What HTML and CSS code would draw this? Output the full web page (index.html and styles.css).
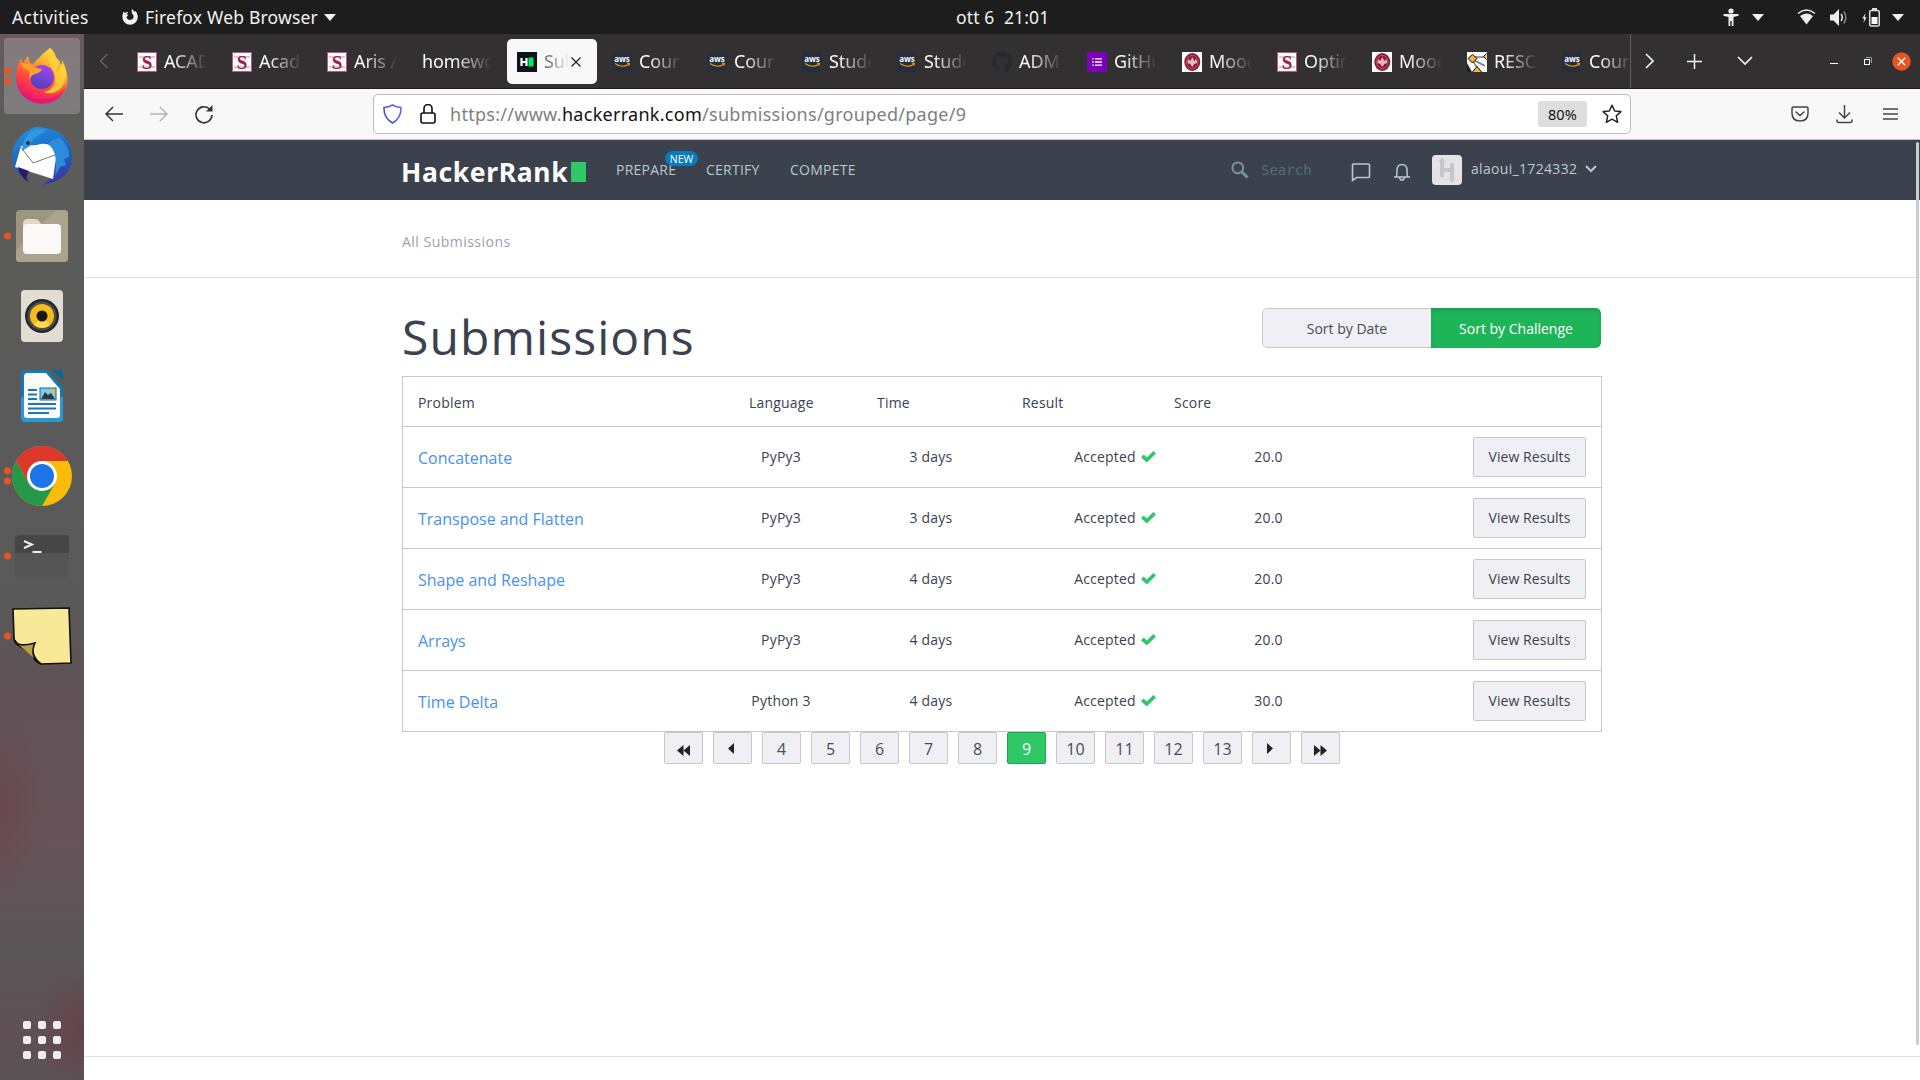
FILE: index.html
```html
<!DOCTYPE html>
<html lang="en">
<head>
<meta charset="utf-8">
<title>Submissions | HackerRank</title>
<link rel="stylesheet" href="styles.css">
</head>
<body>
<svg class="defs" width="0" height="0">
  <defs>
    <linearGradient id="ffBody" x1=".8" y1="0" x2=".3" y2="1"><stop offset="0" stop-color="#fff44f"/><stop offset=".35" stop-color="#ffa32b"/><stop offset=".65" stop-color="#ff4a3a"/><stop offset="1" stop-color="#e5107a"/></linearGradient>
    <linearGradient id="ffCore" x1=".7" y1="0" x2=".3" y2="1"><stop offset="0" stop-color="#a243f5"/><stop offset="1" stop-color="#4b42b5"/></linearGradient>
    <linearGradient id="tbBody" x1=".4" y1="0" x2=".7" y2="1"><stop offset="0" stop-color="#1f8ee0"/><stop offset=".5" stop-color="#1f62bd"/><stop offset="1" stop-color="#3c35a0"/></linearGradient>
    <linearGradient id="shield" x1="0" y1="1" x2="1" y2="0"><stop offset="0" stop-color="#2448d8"/><stop offset="1" stop-color="#9059ff"/></linearGradient>
    <symbol id="fav-s" viewBox="0 0 20 20"><rect x=".5" y=".5" width="19" height="19" fill="#fff" stroke="#c0547a"/><path d="M2 5h16M2 15h16" stroke="#e6c3cf" stroke-width="2"/><text x="10" y="17" text-anchor="middle" class="fav-serif">S</text></symbol>
    <symbol id="fav-aws" viewBox="0 0 20 20"><rect width="20" height="20" fill="#252f3e"/><text x="10" y="10" text-anchor="middle" class="fav-aws">aws</text><path d="M3 11.500Q10 16.500 16.500 12.500M15 11.300l2.500.2-.6 2.200" fill="none" stroke="#f90" stroke-width="1.100"/></symbol>
    <symbol id="fav-moodle" viewBox="0 0 20 20"><rect width="20" height="20" fill="#fff"/><ellipse cx="10.300" cy="10" rx="8" ry="9" fill="#8e1c37"/><ellipse cx="10.300" cy="10" rx="5.800" ry="6.700" fill="none" stroke="#b96378" stroke-width=".8"/><path d="M10.300 15l-2-3-3-1 1-4 2 2 2-4 2 4 2-2 1 4-3 1z" fill="#e3b7c2"/></symbol>
    <symbol id="dot2" viewBox="0 0 12 20"><circle cx="7.500" cy="4.800" r="3.500" fill="#e95420"/><circle cx="7.500" cy="15" r="3.500" fill="#e95420"/></symbol>
    <symbol id="caret" viewBox="0 0 12 7"><path d="M0 0h12L6 7z" fill="#f2f2f2"/></symbol>
    <symbol id="check" viewBox="0 0 15 12"><path d="M0 6.200l2.700-2.700 3.100 3L12.300 0 15 2.600 5.800 11.600z" fill="#2ec866"/></symbol>
  </defs>
</svg>

<header class="topbar">
  <span class="activities">Activities</span>
  <span class="app-menu">
    <svg width="16" height="16" viewBox="0 0 16 16"><path d="M1.500 2.500l1.500 1.500c1-.8 1.800-1 3-1L5 5l1 1.500L4.500 8c.3 2 1.700 3 3.500 3 2.200 0 3.600-1.600 3.600-3.400 0-1.500-.8-2.400-1.800-3V0c1.400.8 1.900 1.500 2.300 2.700l1.400-.7c1.300 1.600 2.300 3.600 2.300 6A7.600 7.600 0 0 1 .4 8c0-2 .5-3.600 1.100-5.500z" fill="#f2f2f2"/></svg>
    <span class="app-name">Firefox Web Browser</span>
    <svg width="12" height="7"><use href="#caret"/></svg>
  </span>
  <span class="clock">ott 6&nbsp; 21:01</span>
  <span class="tray">
    <svg class="access" width="16" height="18" viewBox="0 0 16 18"><circle cx="8" cy="3" r="2.600" fill="#eee"/><path d="M.5 6h15v1.800L10.500 9v9H8.700v-5H7.300v5H5.500V9L.5 7.800z" fill="#eee"/></svg>
    <svg class="caret-a" width="12" height="7"><use href="#caret"/></svg>
    <svg class="wifi" width="19" height="16" viewBox="0 0 19 16"><path d="M1 4.500Q9.500-2.500 18 4.500" fill="none" stroke="#eee" stroke-width="1.600"/><path d="M3 7Q9.500 1.800 16 7L9.500 15.500z" fill="#eee"/></svg>
    <svg class="volume" width="18" height="17" viewBox="0 0 18 17"><path d="M0 5.500h3.500L9 0v17l-5.500-5.500H0z" fill="#eee"/><path d="M11 5q2.500 3.500 0 7" fill="none" stroke="#ddd" stroke-width="1.600"/><path d="M13.800 2.500q4 6 0 12" fill="none" stroke="#888" stroke-width="1.400"/></svg>
    <svg class="battery" width="18" height="19" viewBox="0 0 18 19"><path d="M3.500 5L.3 10.500h2L1.300 15l3.400-5.700H2.700z" fill="#eee"/><rect x="7.700" y="2.500" width="9.600" height="15.500" rx="1.500" fill="none" stroke="#ddd" stroke-width="1.500"/><path d="M10 0h5v2h-5z" fill="#ddd"/><path d="M9.500 9h6v7h-6z" fill="#fff"/></svg>
    <svg width="12" height="7"><use href="#caret"/></svg>
  </span>
</header>

<div class="desktop">
  <nav class="dock">
    <div class="dock-item current"><svg class="run" width="12" height="20"><use href="#dot2"/></svg>
      <svg width="54" height="56" viewBox="0 0 54 56"><path d="M35 0c3 2 5 6 6 10 3 1 4 4 5 7l2-1c5 8 6 17 3 25-4 9-13 14-24 14C12 55 1 45 1 29 1 21 4 14 6 10l2 6c1-3 3-6 5-8l2 7 3 1c6-6 9-10 17-16z" fill="url(#ffBody)"/><path d="M2 34c2 12 12 18 24 17 11 0 20-5 25-13-3 11-12 18-24 18S4 47 2 34z" fill="#e5107a" opacity=".6"/><circle cx="27" cy="29" r="12" fill="url(#ffCore)"/><path d="M6 15c6 0 10 1 13 4 3 1 5 1 8 2-1 3-4 4-7 5-4 1-4 3-5 6-1-4 0-7-1-9-3-2-6-2-8-8z" fill="#ffa02c"/><path d="M35 0c7 7 10 16 6 25 5-5 6-8 6-13 6 10 6 21-2 29-5 5-12 5-16 3 11-2 14-13 9-22-3-6-7-13-3-22z" fill="#ffd43a" opacity=".85"/></svg>
    </div>
    <div class="dock-item"><svg width="62" height="60" viewBox="0 0 62 60"><path d="M18 4Q26-2 33 2C50 3 61 15 61 31c0 14-9 25-30 28 5-4 8-5 9-9L14 43l3 11C6 49 1 40 1 30 1 18 9 9 18 4z" fill="url(#tbBody)"/><path d="M10 20l-6 21 38 12 4-28Q38 15 26 19z" fill="#fff"/><path d="M9 20l13 17 22-8" fill="none" stroke="#777" stroke-width="1"/><path d="M12 17C16 6 25 0 35 4c-5 6-13 4-16 16l-8 5z" fill="#2d9ae0"/><path d="M37 18q5-6 12-6 10 9 9 19l-5 2 2 6-6 2-5 9q4-24-7-32z" fill="#2b8dda"/><path d="M7 41l11 4-3 7 3 4Q9 52 7 41z" fill="#2c1a68"/><circle cx="17" cy="17" r="2" fill="#382c3a"/></svg></div>
    <div class="dock-item"><svg class="run" width="12" height="20"><circle cx="7.500" cy="10" r="3.500" fill="#e95420"/></svg>
      <svg width="52" height="52" viewBox="0 0 52 52"><rect width="52" height="52" rx="4" fill="#9d967f"/><path d="M0 40L40 0h8q4 0 4 4v44q0 4-4 4H4q-4 0-4-4z" fill="#aaa48f"/><path d="M7 14q0-5 5-5h8q2 0 3 2l3 4v12H7z" fill="#ddd9ce"/><rect x="7" y="14" width="38" height="30" rx="4" fill="#faf9f7"/></svg></div>
    <div class="dock-item"><svg width="42" height="52" viewBox="0 0 42 52"><rect width="42" height="52" rx="4" fill="#e2ddd2"/><circle cx="21" cy="26" r="17" fill="#24252f"/><circle cx="21" cy="26" r="14.500" fill="#4e4c4b"/><circle cx="21" cy="26" r="12" fill="#f3bd1d"/><path d="M13 35a12 12 0 0 0 16 0l-8-9z" fill="#ffda4b"/><circle cx="21" cy="26" r="5.500" fill="#17171b"/></svg></div>
    <div class="dock-item"><svg width="42" height="52" viewBox="0 0 42 52"><path d="M4 0h22l16 17v31q0 4-4 4H4q-4 0-4-4V4q0-4 4-4z" fill="#1478b2"/><path d="M0 27h42v21q0 4-4 4H4q-4 0-4-4z" fill="#2a99d0"/><path d="M5 3h20l14 16v26q0 3-3 3H6q-3 0-3-3V5z" fill="#fcfcfc"/><path d="M31 0h7q4 0 4 4v6z" fill="#0c659e"/><path d="M7 20h9M7 24.500h9M7 29h9M7 34h28M7 38.500h28M7 43h21" stroke="#1878b4" stroke-width="2"/><rect x="19" y="18" width="16" height="12" fill="#7cc8ee" stroke="#1469a1" stroke-width="1"/><path d="M20 29l4-7 3 3 3-2 4 6z" fill="#383838"/><circle cx="32" cy="21" r="2.200" fill="#f0bd2c"/></svg></div>
    <div class="dock-item"><svg class="run" width="12" height="20"><use href="#dot2"/></svg>
      <svg width="60" height="60" viewBox="0 0 60 60"><circle cx="30" cy="30" r="30" fill="#fbbc09"/><path d="M4 15A30 30 0 0 1 56 15H30L17 37.500z" fill="#dd382c"/><path d="M4 15A30 30 0 0 0 30 60L43 37.500 30 30 17 37.500z" fill="#279847"/><circle cx="30" cy="30" r="15" fill="#fff"/><circle cx="30" cy="30" r="12" fill="#1b74e8"/></svg></div>
    <div class="dock-item"><svg class="run" width="12" height="20"><circle cx="7.500" cy="10" r="3.500" fill="#e95420"/></svg>
      <svg width="54" height="42" viewBox="0 0 54 42"><rect width="54" height="42" rx="4" fill="#545454"/><path d="M4 0h46q4 0 4 4v14H0V4q0-4 4-4z" fill="#464646"/><path d="M9 6l8 3.500L9 13" fill="none" stroke="#eee" stroke-width="2"/><path d="M17.500 17h9" stroke="#eee" stroke-width="2"/></svg></div>
    <div class="dock-item"><svg class="run" width="12" height="20"><circle cx="7.500" cy="10" r="3.500" fill="#e95420"/></svg>
      <svg width="60" height="58" viewBox="0 0 60 58"><path d="M1 2L57 1l2 55-30 1Q22 55 21 47L6 38Q2 36 2 30z" fill="#f8e998" stroke="#111" stroke-width="1.600"/><path d="M7 38q8 2 16-2-5 7-1 15z" fill="#b5a14a"/><path d="M3 33q2 8 20 3-6 12 6 21" fill="none" stroke="#111" stroke-width="1.600"/></svg></div>
    <div class="app-grid"><i></i><i></i><i></i><i></i><i></i><i></i><i></i><i></i><i></i></div>
  </nav>

  <main class="browser">
    <div class="tabstrip">
      <svg class="tabs-back" width="10" height="16" viewBox="0 0 10 16"><path d="M8.500 1L1.500 8l7 7" fill="none" stroke="#656363" stroke-width="1.500"/></svg>
      <div class="tabs">
        <div class="tab"><svg><use href="#fav-s"/></svg><span>ACAD</span></div>
        <div class="tab"><svg><use href="#fav-s"/></svg><span>Acad</span></div>
        <div class="tab"><svg><use href="#fav-s"/></svg><span>Aris A</span></div>
        <div class="tab wide"><span>homewo</span></div>
        <div class="tab active"><svg viewBox="0 0 20 20"><rect width="20" height="20" fill="#0e141e"/><path d="M4.500 6v8M9.500 6v8M5 10h4" stroke="#fff" stroke-width="2.200"/><path d="M11.500 5.500h5v9h-5z" fill="#00ea64"/></svg><span>Sub</span><svg class="close" viewBox="0 0 10 10"><path d="M.5.5l9 9M9.500.5l-9 9" stroke="#222" stroke-width="1.200"/></svg></div>
        <div class="tab"><svg><use href="#fav-aws"/></svg><span>Cours</span></div>
        <div class="tab"><svg><use href="#fav-aws"/></svg><span>Cours</span></div>
        <div class="tab"><svg><use href="#fav-aws"/></svg><span>Stude</span></div>
        <div class="tab"><svg><use href="#fav-aws"/></svg><span>Stude</span></div>
        <div class="tab"><svg viewBox="0 0 20 20"><path d="M10 0a10 10 0 0 0-3.200 19.500c.5.100.7-.2.700-.5v-2c-3 .6-3.500-1-4-2l-1-1c1.500-.4 2 1.500 3 1.700.8.200 1.500 0 2-.3 0-.7.400-1.200.8-1.500-2.700-.3-4.800-1.400-4.800-5 0-1 .4-2 1-2.700-.2-.8-.2-1.700.1-2.700 1 0 2 .5 2.900 1.100a10 10 0 0 1 5 0c.9-.6 1.900-1.100 2.900-1.100.3 1 .3 1.900.1 2.700.6.700 1 1.700 1 2.700 0 3.600-2.200 4.700-4.800 5 .5.400.9 1.200.9 2.300V19c0 .3.200.6.700.5A10 10 0 0 0 10 0z" fill="#24292e"/></svg><span>ADM_</span></div>
        <div class="tab"><svg viewBox="0 0 20 20"><rect width="20" height="20" fill="#7b00b8"/><path d="M8 6.800h7M8 10h7M8 13.200h7M5.200 6.800h1.600M5.200 10h1.600M5.200 13.200h1.600" stroke="#fff" stroke-width="1.300"/></svg><span>GitHu</span></div>
        <div class="tab"><svg><use href="#fav-moodle"/></svg><span>Mood</span></div>
        <div class="tab"><svg><use href="#fav-s"/></svg><span>Optin</span></div>
        <div class="tab"><svg><use href="#fav-moodle"/></svg><span>Mood</span></div>
        <div class="tab"><svg viewBox="0 0 20 20"><rect width="20" height="20" fill="#fff"/><path d="M5 7L18 14M5 7l5 9M6 5h12" stroke="#777" stroke-width="1.500"/><g fill="#fbb034" stroke="#111"><path d="M5.500 2.500l4.500 4-4.500 4.500L1 6.500z"/><path d="M5 20.500l5-6 5 6z"/><path d="M19.500 1.500l-3 3 3 3"/></g><path d="M0 11l5 9H0z" fill="#222"/></svg><span>RESC</span></div>
        <div class="tab"><svg><use href="#fav-aws"/></svg><span>Cours</span></div>
      </div>
      <div class="tab-tools">
        <svg class="t-next" width="9" height="16" viewBox="0 0 9 16"><path d="M1 1l7 7-7 7" fill="none" stroke="#f5f5f5" stroke-width="1.600"/></svg>
        <svg class="t-plus" width="15" height="15" viewBox="0 0 15 15"><path d="M7.500 0v15M0 7.500h15" stroke="#f5f5f5" stroke-width="1.500"/></svg>
        <svg class="t-list" width="16" height="10" viewBox="0 0 16 10"><path d="M1 1l7 7 7-7" fill="none" stroke="#f5f5f5" stroke-width="1.600"/></svg>
        <svg class="t-min" width="8" height="8" viewBox="0 0 8 8"><path d="M0 6.500h8" stroke="#fff"/></svg>
        <svg class="t-max" width="8" height="8" viewBox="0 0 8 8"><rect x=".5" y="2.500" width="5" height="5" fill="none" stroke="#fff"/><path d="M2 .5h5.500V6" fill="none" stroke="#999"/></svg>
        <svg class="t-close" width="19" height="19" viewBox="0 0 19 19"><circle cx="9.500" cy="9.500" r="9.200" fill="#e95420"/><path d="M5.800 5.800l7.400 7.400M13.200 5.800l-7.400 7.400" stroke="#fff" stroke-width="1.300"/></svg>
      </div>
    </div>

    <div class="toolbar">
      <svg class="back" width="18" height="16" viewBox="0 0 18 16"><path d="M18 8H1M8 1L1 8l7 7" fill="none" stroke="#333" stroke-width="1.500"/></svg>
      <svg class="fwd" width="18" height="16" viewBox="0 0 18 16"><path d="M0 8h17M10 1l7 7-7 7" fill="none" stroke="#b3b3b3" stroke-width="1.500"/></svg>
      <svg class="reload" width="18" height="19" viewBox="0 0 18 19"><path d="M14.500 4A8 8 0 1 0 17 10" fill="none" stroke="#333" stroke-width="1.600"/><path d="M11 6.500h6.500V0z" fill="#333"/></svg>
      <div class="urlbar">
        <svg class="shield" width="19" height="20" viewBox="0 0 19 20"><path d="M9.500 1Q13 3.300 18 3.500 18.500 14 9.500 19 .5 14 1 3.500 6 3.300 9.500 1z" fill="none" stroke="url(#shield)" stroke-width="1.600"/></svg>
        <svg class="lock" width="16" height="20" viewBox="0 0 16 20"><rect x="1" y="9" width="14" height="10" rx="2" fill="none" stroke="#111" stroke-width="1.600"/><path d="M4 9V4.500a4 4 0 0 1 8 0V9" fill="none" stroke="#111" stroke-width="1.600"/></svg>
        <span class="url">https://www.<b>hackerrank.com</b>/submissions/grouped/page/9</span>
        <span class="zoom">80%</span>
        <svg class="star" width="20" height="20" viewBox="0 0 20 20"><path d="M10 1.200l2.700 5.800 6.200.6-4.600 4.200 1.300 6.500L10 15.200l-5.600 3.100 1.300-6.500L1.100 7.600 7.300 7z" fill="none" stroke="#222" stroke-width="1.500" stroke-linejoin="round"/></svg>
      </div>
      <svg class="pocket" width="18" height="16" viewBox="0 0 18 16"><path d="M2.500 1h13q1.500 0 1.500 1.500V7q0 8-8 8T1 7V2.500Q1 1 2.500 1z" fill="none" stroke="#444" stroke-width="1.500"/><path d="M5 6l4 3.500L13 6" fill="none" stroke="#444" stroke-width="1.500" stroke-linecap="round"/></svg>
      <svg class="download" width="17" height="20" viewBox="0 0 17 20"><path d="M8.500 1v13M3 8.500L8.500 14 14 8.500M1 15.500v1q0 2 2 2h11q2 0 2-2v-1" fill="none" stroke="#444" stroke-width="1.500"/></svg>
      <svg class="menu" width="15" height="12" viewBox="0 0 15 12"><path d="M0 1h15M0 6h15M0 11h15" stroke="#444" stroke-width="1.400"/></svg>
    </div>

    <div class="viewport">
      <div class="page">
        <header class="site-nav">
          <div class="container nav-row">
            <a class="logo"><span>HackerRank</span><i></i></a>
            <a class="nav-link prepare">PREPARE<em>NEW</em></a>
            <a class="nav-link certify">CERTIFY</a>
            <a class="nav-link compete">COMPETE</a>
            <svg class="search-icon" width="18" height="18" viewBox="0 0 18 18"><circle cx="6.800" cy="6.800" r="5.400" fill="none" stroke="#7b9397" stroke-width="2"/><path d="M11 11l5.500 5.500" stroke="#7b9397" stroke-width="3"/></svg>
            <span class="search">Search</span>
            <svg class="chat" width="20" height="19" viewBox="0 0 20 19"><path d="M1.500 17.500V2q0-1 1-1h15q1 0 1 1v11.500q0 1-1 1h-12z" fill="none" stroke="#bac8cc" stroke-width="1.600"/></svg>
            <svg class="bell" width="18" height="18" viewBox="0 0 18 18"><path d="M1 14h16M3.500 13.500Q4 12 4 7.500C4 3.500 6 1.500 9 1.500s5 2 5 6q0 4.500.5 6M6.500 14.500q.5 2.500 2.500 2.500t2.500-2.500" fill="none" stroke="#bac8cc" stroke-width="1.500"/></svg>
            <svg class="avatar" width="30" height="30" viewBox="0 0 30 30"><rect width="30" height="30" rx="4" fill="#e4e4e4"/><path d="M10 6v16M20 8v16M10 15h10" stroke="#c5c6c8" stroke-width="4"/><path d="M6.500 7L10 2.500 13.500 7zM16.500 23.500L20 28l3.500-4.500z" fill="#c5c6c8"/></svg>
            <span class="user">alaoui_1724332</span>
            <svg class="user-caret" width="12" height="8" viewBox="0 0 12 8"><path d="M1 1l5 5 5-5" fill="none" stroke="#bac8cc" stroke-width="2"/></svg>
          </div>
        </header>
        <div class="crumbs"><div class="container">All Submissions</div></div>
        <section class="container content">
          <div class="heading">
            <h1>Submissions</h1>
            <div class="sort"><a>Sort by Date</a><a class="on">Sort by Challenge</a></div>
          </div>
          <div class="table">
            <div class="thead"><span>Problem</span><span>Language</span><span>Time</span><span>Result</span><span>Score</span></div>
            <div class="row"><a class="problem">Concatenate</a><span>PyPy3</span><span>3 days</span><span class="result">Accepted<svg width="15" height="12"><use href="#check"/></svg></span><span>20.0</span><a class="btn">View Results</a></div>
            <div class="row"><a class="problem">Transpose and Flatten</a><span>PyPy3</span><span>3 days</span><span class="result">Accepted<svg width="15" height="12"><use href="#check"/></svg></span><span>20.0</span><a class="btn">View Results</a></div>
            <div class="row"><a class="problem">Shape and Reshape</a><span>PyPy3</span><span>4 days</span><span class="result">Accepted<svg width="15" height="12"><use href="#check"/></svg></span><span>20.0</span><a class="btn">View Results</a></div>
            <div class="row"><a class="problem">Arrays</a><span>PyPy3</span><span>4 days</span><span class="result">Accepted<svg width="15" height="12"><use href="#check"/></svg></span><span>20.0</span><a class="btn">View Results</a></div>
            <div class="row"><a class="problem">Time Delta</a><span>Python 3</span><span>4 days</span><span class="result">Accepted<svg width="15" height="12"><use href="#check"/></svg></span><span>30.0</span><a class="btn">View Results</a></div>
          </div>
          <div class="pager">
            <a><svg class="low" width="13" height="11" viewBox="0 0 13 11"><path d="M6.500 0v11L0 5.500zM13 0v11L6.500 5.500z" fill="#222"/></svg></a>
            <a><svg class="high" width="6" height="11" viewBox="0 0 6 11"><path d="M6 0v11L0 5.500z" fill="#222"/></svg></a>
            <a>4</a><a>5</a><a>6</a><a>7</a><a>8</a><a class="on">9</a><a>10</a><a>11</a><a>12</a><a>13</a>
            <a><svg class="high" width="6" height="11" viewBox="0 0 6 11"><path d="M0 0v11l6-5.500z" fill="#222"/></svg></a>
            <a><svg class="low" width="13" height="11" viewBox="0 0 13 11"><path d="M0 0v11l6.500-5.500zM6.500 0v11L13 5.500z" fill="#222"/></svg></a>
          </div>
        </section>
        <footer class="footer"></footer>
      </div>
      <div class="scrollbar"></div>
    </div>
  </main>
</div>
</body>
</html>
```

FILE: styles.css
```css
* { box-sizing: border-box; }
body { margin: 0; width: 1920px; height: 1080px; overflow: hidden; background: #fff; font-family: "Open Sans", "Noto Sans", sans-serif; display: flex; flex-direction: column; }
svg { display: block; flex: none; }
.defs { position: absolute; }

/* desktop top bar */
.topbar { height: 34px; flex: none; background: #1d1d1d; color: #f2f2f2; display: flex; align-items: center; font: 17.5px/34px "Noto Sans", sans-serif; white-space: nowrap; }
.activities { margin-left: 12px; width: 110px; letter-spacing: .4px; }
.app-menu { display: flex; align-items: center; width: 834px; }
.app-name { margin: 0 6px 0 7px; letter-spacing: .2px; }
.clock { width: 767px; letter-spacing: .15px; }
.tray { display: flex; align-items: center; }
.access { margin-right: 13px; }
.caret-a { margin-right: 33px; }
.wifi { margin-right: 14px; }
.volume { margin-right: 14px; }
.battery { margin-right: 12px; }

/* dock */
.desktop { flex: 1; display: flex; min-height: 0; }
.dock { width: 84px; flex: none; padding-top: 2px; display: flex; flex-direction: column; background: radial-gradient(ellipse 50px 60px at 84px 995px, #65434b, transparent), radial-gradient(ellipse 50px 90px at 0 775px, #6c3e4888, transparent), linear-gradient(#68595f 0, #5c5c5b 80px, #595959 560px, #5f5257 640px, #665359 800px, #595557 920px, #5f5056 1000px, #5b5256 100%); }
.dock-item { height: 76px; width: 76px; margin: 2px 4px; border-radius: 4px; display: flex; align-items: center; justify-content: center; position: relative; }
.dock-item.current { background: #ffffff33; }
.run { position: absolute; left: -4px; top: 28px; }
.app-grid { display: grid; grid-template-columns: repeat(3, 8px); gap: 7px; margin: auto 0 21px 23px; }
.app-grid i { height: 8px; border-radius: 2px; background: #eee; }

/* browser chrome */
.browser { flex: 1; min-width: 0; display: flex; flex-direction: column; }
.tabstrip { height: 55px; flex: none; background: #333031; border-bottom: 1px solid #1f1f1f; display: flex; align-items: center; }
.tabs-back { margin: 0 15.5px 0 15px; }
.tabs { width: 1506.5px; height: 54px; display: flex; overflow: hidden; border-right: 1px solid #5f5d5e; }
.tab { width: 90px; height: 45px; margin: 5px 2.5px; padding-left: 10px; flex: none; display: flex; align-items: center; color: #fbfbfb; font: 18px/47px "Noto Sans", sans-serif; letter-spacing: -.1px; }
.tab svg { width: 20px; height: 20px; }
.tab span { width: 43px; margin-left: 7px; overflow: hidden; white-space: nowrap; -webkit-mask-image: linear-gradient(90deg, #000 22%, transparent); mask-image: linear-gradient(90deg, #000 22%, transparent); }
.tab.wide span { width: 70px; margin-left: 0; -webkit-mask-image: linear-gradient(90deg, #000 45%, transparent); mask-image: linear-gradient(90deg, #000 45%, transparent); }
.tab.active { background: #f8f8f8; border-radius: 5px; color: #777; }
.tab.active span { width: 25px; }
.tab.active .close { width: 10px; height: 10px; margin-left: 2px; }
.fav-serif { font: bold 19px "Liberation Serif", serif; fill: #9c2148; }
.fav-aws { font: bold 8px "Open Sans", sans-serif; fill: #fff; }
.tab-tools { display: flex; align-items: center; }
.t-next { margin: 0 33px 0 14px; }
.t-plus { margin-right: 35px; }
.t-list { margin-right: 77px; }
.t-min { margin-right: 26px; }
.t-max { margin-right: 20px; }

.toolbar { height: 51px; flex: none; background: #f8f8f8; border-bottom: 1px solid #c0c0c0; display: flex; align-items: center; }
.back { margin: 0 27px 0 21px; }
.fwd { margin-right: 27px; }
.reload { margin-right: 160px; }
.urlbar { width: 1258px; height: 40px; border: 1px solid #bcbcbc; border-radius: 5px; background: #fff; display: flex; align-items: center; padding-left: 10px; }
.shield { margin-left: -1px; }
.lock { margin: 0 14px 0 18px; }
.url { width: 1088px; font: 18px/38px "Noto Sans", sans-serif; letter-spacing: .28px; color: #808080; white-space: nowrap; }
.url b { font-weight: 400; color: #111; }
.zoom { width: 49px; height: 26px; border-radius: 3px; background: #dedede; color: #111; font: 14.500px/27px "Noto Sans", sans-serif; letter-spacing: .2px; text-align: center; margin-right: 15px; }
.pocket { margin: 0 27px 0 160px; }
.download { margin-right: 30px; }

/* page */
.viewport { flex: 1; min-height: 0; display: flex; position: relative; }
.page { flex: 1; display: flex; flex-direction: column; }
.scrollbar { position: absolute; right: 1px; top: 2px; width: 3px; height: 903px; border-radius: 2px; background: #cdcdcd; }
.container { width: 1200px; margin-left: 318px; }
.site-nav { height: 60px; flex: none; background: #3b414d; }
.nav-row { height: 60px; display: flex; align-items: center; color: #b7c9cc; font-size: 14px; white-space: nowrap; }
.logo { width: 214px; display: flex; align-items: center; color: #fff; font: 700 26.500px/30px "Noto Sans", sans-serif; padding-top: 3px; }
.logo span { width: 169px; letter-spacing: .65px; margin-left: -1px; margin-right: 1px; }
.logo i { width: 15px; height: 20px; background: #2ec866; }
.nav-link { position: relative; margin-top: -2px; letter-spacing: .25px; }
.prepare { width: 90px; }
.certify { width: 84px; }
.compete { width: 441px; }
.nav-link em { position: absolute; left: 49px; top: -9px; width: 33px; height: 15px; border-radius: 8px; background: #097bbf; color: #fff; font: 10.500px/16px "Open Sans", sans-serif; letter-spacing: 0; text-align: center; }
.search-icon { margin-right: 12px; }
.search { width: 90px; font: 14px "DejaVu Sans Mono", monospace; color: #566d73; }
.chat { margin: 4px 22px 0 0; }
.bell { margin: 4px 21px 0 0; }
.user { width: 114px; margin-left: 9px; margin-top: -3px; letter-spacing: .32px; }
.user-caret { margin-top: -3px; }
.crumbs { height: 78px; flex: none; border-bottom: 1px solid #e1e1e1; font-size: 14px; letter-spacing: .48px; line-height: 83px; color: #98a2b3; }
.heading { height: 98px; display: flex; justify-content: space-between; }
h1 { margin: 22px 0 0; font-size: 48px; font-weight: 400; letter-spacing: 1.1px; line-height: 74px; color: #39424e; }
.sort { display: flex; width: 339px; height: 40px; margin: 30px 1px 0 0; border-radius: 5px; overflow: hidden; font-size: 14px; line-height: 40px; text-align: center; color: #454c59; }
.sort a { width: 169px; background: #f0eff4; border: 1px solid #c2c7d0; border-right: 0; border-radius: 5px 0 0 5px; }
.sort a.on { width: 170px; background: #1eb559; color: #fff; border: 0; border-radius: 0 5px 5px 0; box-shadow: inset 0 2px 4px #00000026; line-height: 42px; }
.table { border: 1px solid #c2c7d0; color: #39424e; font-size: 14px; letter-spacing: .2px; }
.thead { height: 50px; border-bottom: 1px solid #c2c7d0; padding: 1px 0 0 15px; display: grid; grid-template-columns: 331px 128px 145px 152px 1fr; align-items: center; }
.row { height: 61px; border-bottom: 1px solid #c2c7d0; padding: 0 15px; display: grid; grid-template-columns: 288px 150px 150px 218px 89px 1fr; align-items: center; text-align: center; }
.row:last-child { border-bottom: 0; height: 60px; }
.row > span { margin-top: -2px; }
.problem { text-align: left; font-size: 16px; letter-spacing: 0; color: #4a90f3; padding-top: 2px; }
.result { display: flex; align-items: center; justify-content: center; gap: 5px; }
.result svg { margin-top: 2px; }
.btn { justify-self: end; width: 113px; height: 40px; background: #f0eff4; border: 1px solid #c2c7d0; border-radius: 2px; line-height: 38px; letter-spacing: .05px; }
.pager { display: flex; justify-content: center; gap: 10px; }
.pager a { width: 39px; height: 32px; border: 1px solid #c2c7d0; border-radius: 2px; background: #f0eff4; color: #454c59; font-size: 16px; line-height: 32px; display: flex; justify-content: center; }
.pager a.on { background: #2ec866; border-color: #1ba94c; color: #fff; }
.low { margin-top: 12px; }
.high { margin: 10px 4px 0 0; }
.footer { margin-top: auto; height: 24px; border-top: 1px solid #e1e1e1; }
```
